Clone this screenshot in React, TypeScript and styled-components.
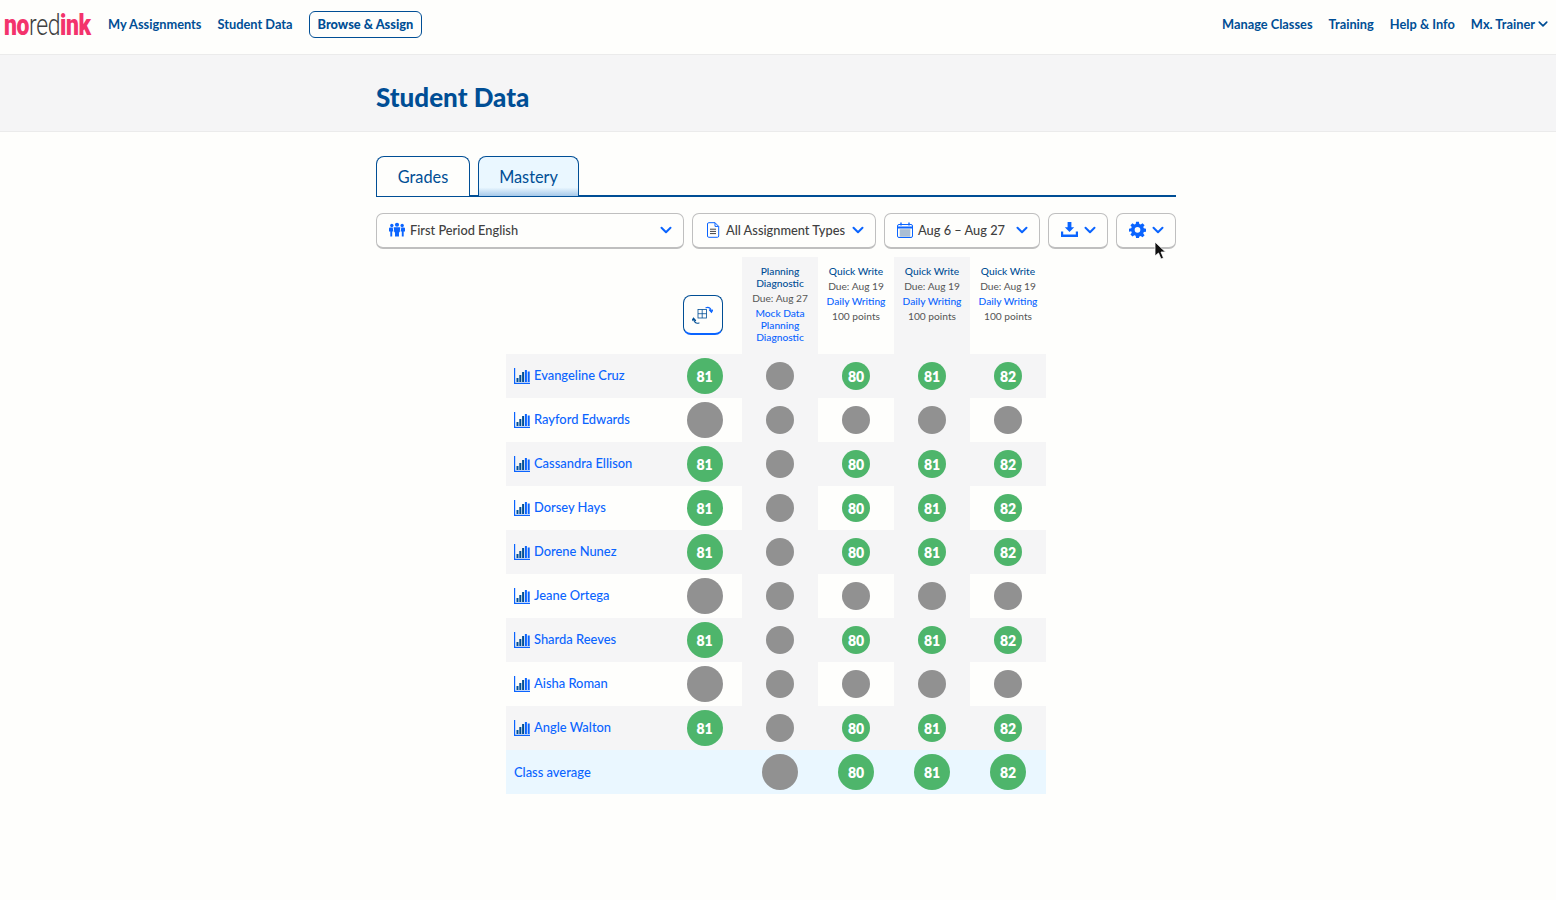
import React from "react";
import styled, { createGlobalStyle } from "styled-components";

const Global = createGlobalStyle`
  html, body { margin: 0; padding: 0; background: #fefefc; }
  body { font-family: "Lato", "Open Sans", sans-serif; color: #404040; }
  svg { flex-shrink: 0; }
`;

const Page = styled.div`
  position: relative;
  width: 1556px;
  height: 900px;
  overflow: hidden;
  background: #fefefc;
`;

const Header = styled.header`
  height: 48px;
  border-bottom: 1px solid #ebebeb;
  display: flex;
  align-items: center;
  justify-content: space-between;
  padding: 0 8px 6px 4px;
  box-sizing: content-box;
`;

const NavSide = styled.nav`
  display: flex;
  align-items: center;
  gap: 16px;
`;

const Logo = styled.div`
  width: 88px;
  height: 30px;
  font-family: "Roboto", sans-serif;
  font-size: 30px;
  line-height: 30px;
  white-space: nowrap;
  transform: translateY(1px) scaleX(0.765);
  transform-origin: left center;
  letter-spacing: -0.5px;
`;

const LogoBold = styled.span`
  color: #f3336c;
  font-weight: 900;
`;

const LogoThin = styled.span`
  color: #404040;
  font-weight: 300;
`;

const NavLink = styled.a`
  color: #004e95;
  font-size: 12.8px;
  font-weight: 700;
  white-space: nowrap;
  display: flex;
  align-items: center;
  gap: 3px;
`;

const NavButton = styled(NavLink)`
  height: 25px;
  padding: 0 8px;
  border: 1px solid #004e95;
  border-radius: 6px;
  font-weight: 900;
`;

const Band = styled.div`
  height: 77px;
  background: #f5f5f6;
  border-bottom: 1px solid #ebebeb;
  display: flex;
  align-items: center;
  padding: 8px 0 0 376px;
  box-sizing: border-box;
`;

const Title = styled.h1`
  margin: 0;
  color: #004e95;
  font-size: 26px;
  font-weight: 900;
`;

const Main = styled.main`
  width: 800px;
  margin: 24px 0 0 376px;
`;

const Tabs = styled.div`
  display: flex;
  gap: 8px;
  box-sizing: content-box;
  height: 39px;
  border-bottom: 2px solid #004e95;
`;

const Tab = styled.div<{ $active?: boolean; $w: number }>`
  width: ${(p) => p.$w}px;
  height: 40px;
  box-sizing: border-box;
  border: 1px solid #004e95;
  border-bottom: none;
  border-radius: 8px 8px 0 0;
  display: flex;
  justify-content: center;
  align-items: center;
  color: #004e95;
  font-size: 16.3px;
  background: ${(p) =>
    p.$active
      ? "linear-gradient(to bottom, #eaf7ff 0, #eaf7ff 78%, #a6c9ea 100%)"
      : "#fefefc"};
`;

const Filters = styled.div`
  display: flex;
  gap: 8px;
  margin-top: 16px;
`;

const Filter = styled.div<{ $w: number }>`
  width: ${(p) => p.$w}px;
  height: 36px;
  box-sizing: border-box;
  border: 1px solid #bfbfbf;
  border-bottom-width: 2px;
  border-radius: 7px;
  display: flex;
  align-items: center;
  padding: 0 11px 2px 12px;
  gap: 5px;
  font-size: 12.8px;
  font-weight: 500;
  color: #404040;
  white-space: nowrap;

  > svg:last-child {
    margin-left: auto;
  }
`;

const Table = styled.div`
  width: 540px;
  margin: 8px 0 0 130px;
  display: grid;
  grid-template-columns: 161px 75px repeat(4, 76px);
  grid-auto-rows: 44px;
  grid-template-rows: 97px;
`;

const CornerCell = styled.div`
  grid-column: 1 / 2;
`;

const ToggleCell = styled.div`
  display: flex;
  justify-content: center;
  padding: 38px 4px 0 0;
`;

const ToggleButton = styled.div`
  width: 40px;
  height: 40px;
  box-sizing: border-box;
  border: 1px solid #004e95;
  border-bottom: 2px solid #0a64ff;
  border-radius: 8px;
  display: flex;
  align-items: center;
  justify-content: center;
`;

const HeadCell = styled.div<{ $shade: boolean }>`
  background: ${(p) => (p.$shade ? "#f5f5f6" : "transparent")};
  text-align: center;
  padding-top: 8px;
  font-size: 10.2px;
  line-height: 12px;
`;

const HeadTitle = styled.div`
  color: #004e95;
  font-weight: 500;
`;

const HeadLine = styled.div`
  margin-top: 3px;
  color: #555;
  font-weight: 400;
`;

const HeadKind = styled.div`
  margin-top: 3px;
  color: #0a64ff;
  font-weight: 500;
`;

const NameCell = styled.div<{ $bg: string; $lift?: number }>`
  background: ${(p) => p.$bg};
  display: flex;
  align-items: center;
  gap: 4px;
  padding: 0 0 ${(p) => p.$lift ?? 3}px 8px;
  color: #0a64ff;
  font-size: 12.9px;
  font-weight: 500;
  white-space: nowrap;
`;

const Cell = styled.div<{ $bg: string }>`
  background: ${(p) => p.$bg};
  display: flex;
  align-items: center;
  justify-content: center;
`;

const Dot = styled.div<{ $big?: boolean; $score: boolean }>`
  width: ${(p) => (p.$big ? 36 : 28)}px;
  height: ${(p) => (p.$big ? 36 : 28)}px;
  border-radius: 50%;
  background: ${(p) => (p.$score ? "#4eb56b" : "#919191")};
  color: #fff;
  font-size: 14px;
  font-weight: 800;
  display: flex;
  align-items: center;
  justify-content: center;
`;

const Cursor = styled.svg`
  position: absolute;
  left: 1154px;
  top: 241px;
`;

const ChartSvg = styled.svg`
  margin-top: 3px;
`;

const Chevron = ({ size = 12, color = "#0a64ff" }: { size?: number; color?: string }) => (
  <svg width={size} height={size} viewBox="0 0 12 12" fill="none">
    <path d="M1.500 3.800 6 8.200l4.500-4.400" stroke={color} strokeWidth="2" strokeLinecap="round" strokeLinejoin="round" />
  </svg>
);

const PeopleIcon = () => (
  <svg width="16" height="15" viewBox="0 0 17 15" fill="#0a64ff">
    <circle cx="3" cy="3.200" r="1.800" />
    <circle cx="8.500" cy="2.400" r="2.200" />
    <circle cx="14" cy="3.200" r="1.800" />
    <path d="M0 6.500Q0 5.400 1.200 5.400H4L4.600 9.500H3.400V15H1.400V9.500H0Z" />
    <path d="M17 6.500Q17 5.400 15.800 5.400H13L12.400 9.500H13.600V15H15.600V9.500H17Z" />
    <path d="M5 5.200H12L11.400 10.500H10.600V15H6.400V10.500H5.600Z" />
  </svg>
);

const DocIcon = () => (
  <svg width="16" height="16" viewBox="-2 0 16 16" fill="none" stroke="#0a64ff" strokeWidth="1">
    <path d="M.5 2A1.300 1.300 0 0 1 1.800.7H8l3.700 3.700V14a1.300 1.300 0 0 1-1.300 1.300H1.800A1.300 1.300 0 0 1 .5 14Z" />
    <path d="M8 .7v3.700h3.700" />
    <path d="M3 7.200h6M3 9.400h6M3 11.600h6" stroke="#404040" />
  </svg>
);

const CalendarIcon = () => (
  <svg width="16" height="16" viewBox="0 0 16 16" fill="none" stroke="#0a64ff" strokeWidth="1">
    <rect x="0.500" y="2.500" width="15" height="13" rx="1.500" />
    <path d="M.5 5.500h15" strokeWidth="2" />
    <path d="M4 .5v3M12 .5v3" strokeWidth="1.400" />
    <path d="M2.500 8h11M2.500 10h11M2.500 12h11M2.500 14h11M4 7.500v7M6 7.500v7M8 7.500v7M10 7.500v7M12 7.500v7" stroke="#6d8fb5" strokeWidth="0.700" />
  </svg>
);

const DownloadIcon = () => (
  <svg width="17" height="15" viewBox="0 0 17 15" fill="#0a64ff">
    <path d="M6.600 0h3.800v5.200h2.800L8.500 10 3.800 5.200h2.800Z" />
    <path d="M0 9.500h2.200v3h12.600v-3H17V15H0Z" />
  </svg>
);

const GearIcon = () => (
  <svg width="17" height="17" viewBox="0 0 24 24" fill="#0a64ff">
    <path
      fillRule="evenodd"
      d="M10 1h4l.6 3.100 1.900.8L19.100 3 22 5.900l-1.900 2.600.8 1.900L24 11v4l-3.100.6-.8 1.900 1.900 2.600-2.900 2.900-2.600-1.900-1.900.8L14 24h-4l-.6-3.100-1.900-.8L4.900 22 2 19.100l1.900-2.600-.8-1.900L0 15v-4l3.100-.6.8-1.900L2 5.900 4.900 3l2.600 1.900 1.900-.8ZM12 8.500a4 4 0 1 0 0 8 4 4 0 0 0 0-8Z"
    />
  </svg>
);

const ChartIcon = () => (
  <ChartSvg width="16" height="16" viewBox="0 0 16 16" fill="#0a64ff">
    <path d="M0 0h1.200v14.800H16V16H0Z" />
    <rect x="2.500" y="10" width="2" height="4" fill="#004e95" />
    <rect x="5.300" y="7" width="2" height="7" fill="#004e95" />
    <rect x="8.100" y="4" width="2" height="10" fill="#004e95" />
    <rect x="10.900" y="2" width="2" height="12" />
    <rect x="13.700" y="3.500" width="2" height="10.500" />
  </ChartSvg>
);

const SwapIcon = () => (
  <svg width="21" height="19" viewBox="0 -1.500 21 19" fill="none" stroke="#0a64ff" strokeWidth="1.200">
    <rect x="6" y="3" width="8.500" height="8.500" stroke="#004e95" strokeWidth="0.800" />
    <path d="M10.200 3v8.500M6 7.200h8.500" stroke="#004e95" strokeWidth="0.800" />
    <path d="M14 1.200c3-1 5 .5 5.500 3.800M17.500 3.500l2 2.300 1.300-2.300" strokeLinecap="round" />
    <path d="M7 16.500c-3 .8-5-.5-5.500-4M3.500 14l-2-2.300L0 14" stroke="#004e95" strokeLinecap="round" />
  </svg>
);

type Col = { title: string[]; due: string; kind: string[]; pts?: string };

const columns: Col[] = [
  { title: ["Planning", "Diagnostic"], due: "Due: Aug 27", kind: ["Mock Data", "Planning", "Diagnostic"] },
  { title: ["Quick Write"], due: "Due: Aug 19", kind: ["Daily Writing"], pts: "100 points" },
  { title: ["Quick Write"], due: "Due: Aug 19", kind: ["Daily Writing"], pts: "100 points" },
  { title: ["Quick Write"], due: "Due: Aug 19", kind: ["Daily Writing"], pts: "100 points" },
];

const students: { name: string; scored: boolean }[] = [
  { name: "Evangeline Cruz", scored: true },
  { name: "Rayford Edwards", scored: false },
  { name: "Cassandra Ellison", scored: true },
  { name: "Dorsey Hays", scored: true },
  { name: "Dorene Nunez", scored: true },
  { name: "Jeane Ortega", scored: false },
  { name: "Sharda Reeves", scored: true },
  { name: "Aisha Roman", scored: false },
  { name: "Angle Walton", scored: true },
];

const scores = ["80", "81", "82"];

export default function App() {
  return (
    <Page>
      <Global />
      <Header>
        <NavSide>
          <Logo>
            <LogoBold>no</LogoBold>
            <LogoThin>red</LogoThin>
            <LogoBold>ink</LogoBold>
          </Logo>
          <NavLink>My Assignments</NavLink>
          <NavLink>Student Data</NavLink>
          <NavButton>Browse &amp; Assign</NavButton>
        </NavSide>
        <NavSide>
          <NavLink>Manage Classes</NavLink>
          <NavLink>Training</NavLink>
          <NavLink>Help &amp; Info</NavLink>
          <NavLink>
            Mx. Trainer <Chevron size={10} color="#004e95" />
          </NavLink>
        </NavSide>
      </Header>
      <Band>
        <Title>Student Data</Title>
      </Band>
      <Main>
        <Tabs>
          <Tab $w={94}>Grades</Tab>
          <Tab $w={101} $active>
            Mastery
          </Tab>
        </Tabs>
        <Filters>
          <Filter $w={308}>
            <PeopleIcon />
            First Period English
            <Chevron />
          </Filter>
          <Filter $w={184}>
            <DocIcon />
            All Assignment Types
            <Chevron />
          </Filter>
          <Filter $w={156}>
            <CalendarIcon />
            Aug 6 – Aug 27
            <Chevron />
          </Filter>
          <Filter $w={60}>
            <DownloadIcon />
            <Chevron />
          </Filter>
          <Filter $w={60}>
            <GearIcon />
            <Chevron />
          </Filter>
        </Filters>
        <Table>
          <CornerCell />
          <ToggleCell>
            <ToggleButton>
              <SwapIcon />
            </ToggleButton>
          </ToggleCell>
          {columns.map((c, i) => (
            <HeadCell key={i} $shade={i % 2 === 0}>
              <HeadTitle>
                {c.title.map((t) => (
                  <div key={t}>{t}</div>
                ))}
              </HeadTitle>
              <HeadLine>{c.due}</HeadLine>
              <HeadKind>
                {c.kind.map((t) => (
                  <div key={t}>{t}</div>
                ))}
              </HeadKind>
              {c.pts && <HeadLine>{c.pts}</HeadLine>}
            </HeadCell>
          ))}
          {students.map((s, r) => {
            const bg = r % 2 === 0 ? "#f5f5f6" : "transparent";
            return (
              <React.Fragment key={s.name}>
                <NameCell $bg={bg}>
                  <ChartIcon />
                  {s.name}
                </NameCell>
                <Cell $bg={bg}>
                  <Dot $big $score={s.scored}>
                    {s.scored ? "81" : ""}
                  </Dot>
                </Cell>
                <Cell $bg="#f5f5f6">
                  <Dot $score={false} />
                </Cell>
                {scores.map((v, i) => (
                  <Cell key={v} $bg={i === 1 ? "#f5f5f6" : bg}>
                    <Dot $score={s.scored}>{s.scored ? v : ""}</Dot>
                  </Cell>
                ))}
              </React.Fragment>
            );
          })}
          <NameCell $bg="#eaf7ff" $lift={1}>
            Class average
          </NameCell>
          <Cell $bg="#eaf7ff" />
          <Cell $bg="#eaf7ff">
            <Dot $big $score={false} />
          </Cell>
          {scores.map((v) => (
            <Cell key={v} $bg="#eaf7ff">
              <Dot $big $score>
                {v}
              </Dot>
            </Cell>
          ))}
        </Table>
      </Main>
      <Cursor width="13" height="19" viewBox="0 0 13 19">
        <path d="M1 1v14l3.500-3 2.500 6 2.500-1-2.500-6h4.500Z" fill="#111" stroke="#fff" strokeWidth="0.800" />
      </Cursor>
    </Page>
  );
}
